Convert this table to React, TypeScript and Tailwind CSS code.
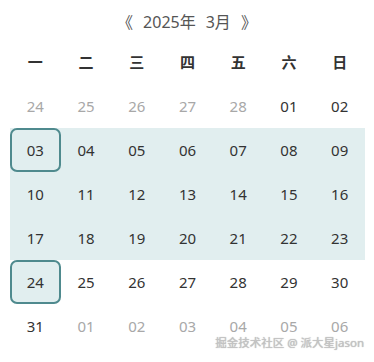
import React from "react";

type Day = { label: string; muted: boolean; selected?: boolean };

const weeks: Day[][] = [
  ["24", "25", "26", "27", "28"].map((l) => ({ label: l, muted: true })).concat(
    ["01", "02"].map((l) => ({ label: l, muted: false }))
  ),
  ["03", "04", "05", "06", "07", "08", "09"].map((l, i) => ({ label: l, muted: false, selected: i === 0 })),
  ["10", "11", "12", "13", "14", "15", "16"].map((l) => ({ label: l, muted: false })),
  ["17", "18", "19", "20", "21", "22", "23"].map((l) => ({ label: l, muted: false })),
  ["24", "25", "26", "27", "28", "29", "30"].map((l, i) => ({ label: l, muted: false, selected: i === 0 })),
  [{ label: "31", muted: false }].concat(
    ["01", "02", "03", "04", "05", "06"].map((l) => ({ label: l, muted: true }))
  ),
];

const weekdays = ["一", "二", "三", "四", "五", "六", "日"];

export default function App() {
  return (
    <div
      className="relative w-[374px] h-[362px] bg-white overflow-hidden"
      style={{ fontFamily: '"Noto Sans", "Noto Sans CJK SC", sans-serif' }}
    >
      <div className="pt-[4px] h-[40px] flex items-center justify-center gap-[10px] text-[16px] text-[#555]">
        <span>《</span>
        <span>2025年</span>
        <span>3月</span>
        <span>》</span>
      </div>
      <div className="pl-[10px] pr-[9px]">
        <div className="grid grid-cols-7 h-[44px] items-center">
          {weekdays.map((w) => (
            <div key={w} className="text-center text-[15px] font-bold text-[#333]">
              {w}
            </div>
          ))}
        </div>
        {weeks.map((week, wi) => (
          <div
            key={wi}
            className={`grid grid-cols-7 h-[44px] ${wi >= 1 && wi <= 3 ? "bg-[#e1eeef]" : ""}`}
          >
            {week.map((d, di) => (
              <div
                key={di}
                className={`flex items-center justify-center text-[15px] ${
                  d.muted ? "text-[#a8a8a8]" : "text-[#333]"
                } ${d.selected ? "border-2 border-[#4f8a8e] rounded-[7px] bg-[#e1eeef]" : ""}`}
              >
                {d.label}
              </div>
            ))}
          </div>
        ))}
      </div>
      <div
        className="absolute right-[10px] top-[337px] text-[11.5px] text-[#c4c4c4] leading-none"
        style={{ textShadow: "0 0 1px rgba(0,0,0,0.35)" }}
      >
        掘金技术社区 @ 派大星jason
      </div>
    </div>
  );
}
